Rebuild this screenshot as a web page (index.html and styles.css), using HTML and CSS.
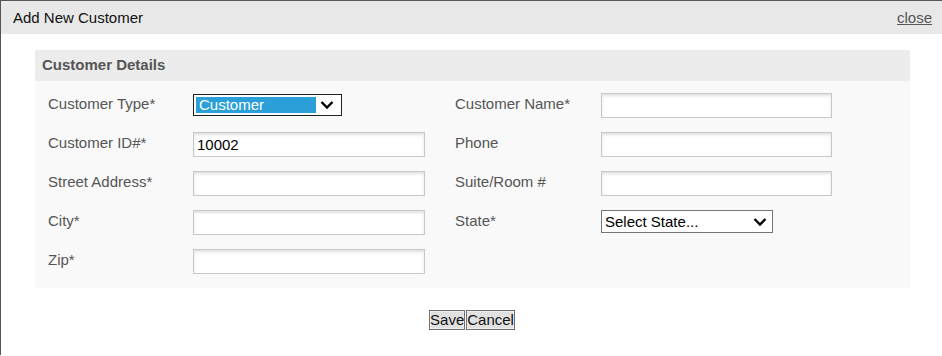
FILE: index.html
```html
<!DOCTYPE html>
<html lang="en">
<head>
    <meta charset="UTF-8">
    <meta name="viewport" content="width=device-width, initial-scale=1.0">
    <title>Add New Customer</title>
    <link rel="stylesheet" href="styles.css">
</head>
<body>
    <div class="dialog">
        <div class="dialog-header">
            <span class="dialog-title">Add New Customer</span>
            <a href="#" class="close-link">close</a>
        </div>

        <div class="dialog-body">
            <div class="panel">
                <div class="panel-header">Customer Details</div>
                <div class="panel-body">
                    <label class="field-label">Customer Type*</label>
                    <div class="field">
                        <div class="select select-focused type-select">
                            <span class="select-value">Customer</span>
                            <svg class="chevron" width="14" height="10" viewBox="0 0 14 10"><path d="M1.5 2 L7 7.5 L12.5 2" fill="none" stroke="#000" stroke-width="2.4"/></svg>
                        </div>
                    </div>
                    <label class="field-label">Customer Name*</label>
                    <div class="field"><input type="text" class="text-input"></div>

                    <label class="field-label">Customer ID#*</label>
                    <div class="field"><input type="text" class="text-input" value="10002"></div>
                    <label class="field-label">Phone</label>
                    <div class="field"><input type="text" class="text-input"></div>

                    <label class="field-label">Street Address*</label>
                    <div class="field"><input type="text" class="text-input"></div>
                    <label class="field-label">Suite/Room #</label>
                    <div class="field"><input type="text" class="text-input"></div>

                    <label class="field-label">City*</label>
                    <div class="field"><input type="text" class="text-input"></div>
                    <label class="field-label">State*</label>
                    <div class="field">
                        <div class="select state-select">
                            <span class="select-value">Select State...</span>
                            <svg class="chevron" width="14" height="10" viewBox="0 0 14 10"><path d="M1.5 2 L7 7.5 L12.5 2" fill="none" stroke="#000" stroke-width="2.4"/></svg>
                        </div>
                    </div>

                    <label class="field-label">Zip*</label>
                    <div class="field"><input type="text" class="text-input"></div>
                </div>
            </div>

            <div class="actions"><button class="btn">Save</button><button class="btn">Cancel</button></div>
        </div>
    </div>
</body>
</html>
```

FILE: styles.css
```css
body {
    margin: 0;
    font-family: "Liberation Sans", Arial, sans-serif;
    font-size: 15px;
    background: white;
}
.dialog {
    border-top: 1px solid #555;
    border-left: 1px solid #555;
    height: 355px;
    box-sizing: border-box;
}
.dialog-header {
    height: 33px;
    background: #e8e8e8;
    display: flex;
    align-items: center;
    justify-content: space-between;
    padding: 0 10px 0 12px;
}
.dialog-title {
    color: #111;
    font-size: 15px;
}
.close-link {
    color: #555;
    font-size: 15px;
    text-decoration: underline;
}
.dialog-body {
    padding: 16px 32px 0 34px;
}
.panel {
    background: #f9f9f9;
}
.panel-header {
    height: 31px;
    line-height: 30px;
    background: #ececec;
    color: #555;
    font-weight: bold;
    font-size: 15px;
    padding-left: 7px;
}
.panel-body {
    display: grid;
    grid-template-columns: 145px 262px 146px 231px;
    grid-auto-rows: 25px;
    row-gap: 14px;
    padding: 12px 13px 14px;
}
.field-label {
    align-self: center;
    color: #555;
    font-size: 15px;
    margin-top: -5px;
}
.field {
    display: flex;
    align-items: center;
}
.text-input {
    width: 232px;
    height: 25px;
    box-sizing: border-box;
    border: 1px solid #c8c8c8;
    box-shadow: inset 0 2px 3px rgba(0,0,0,0.12);
    background: white;
    font-family: inherit;
    font-size: 15px;
    color: #000;
    padding: 0 3px;
    margin: 0;
}
.panel-body > .field:nth-child(4n) .text-input {
    width: 231px;
}
.select {
    display: flex;
    align-items: center;
    box-sizing: border-box;
    background: white;
    font-size: 15px;
    color: #000;
}
.select-value {
    flex: 1;
    line-height: 16px;
    white-space: nowrap;
}
.chevron {
    margin: 0 5px 0 4px;
}
.type-select {
    width: 149px;
    height: 22px;
    border: 1px solid #222;
    padding: 2px;
    margin-top: -2px;
}
.select-focused .select-value {
    background: #2a9fd8;
    color: white;
    padding-left: 3px;
}
.state-select {
    width: 172px;
    height: 23px;
    border: 1px solid #767676;
    padding: 0 0 0 3px;
    margin-top: -2px;
}
.actions {
    text-align: center;
    margin-top: 22px;
}
.btn {
    font-family: inherit;
    font-size: 15px;
    color: #111;
    background: #e1e1e1;
    border: 1px solid #707070;
    box-shadow: inset 0 0 0 1px #f0f0f0;
    height: 20px;
    line-height: 16px;
    padding: 0;
    margin: 0 1px 0 0;
    vertical-align: top;
}
```
